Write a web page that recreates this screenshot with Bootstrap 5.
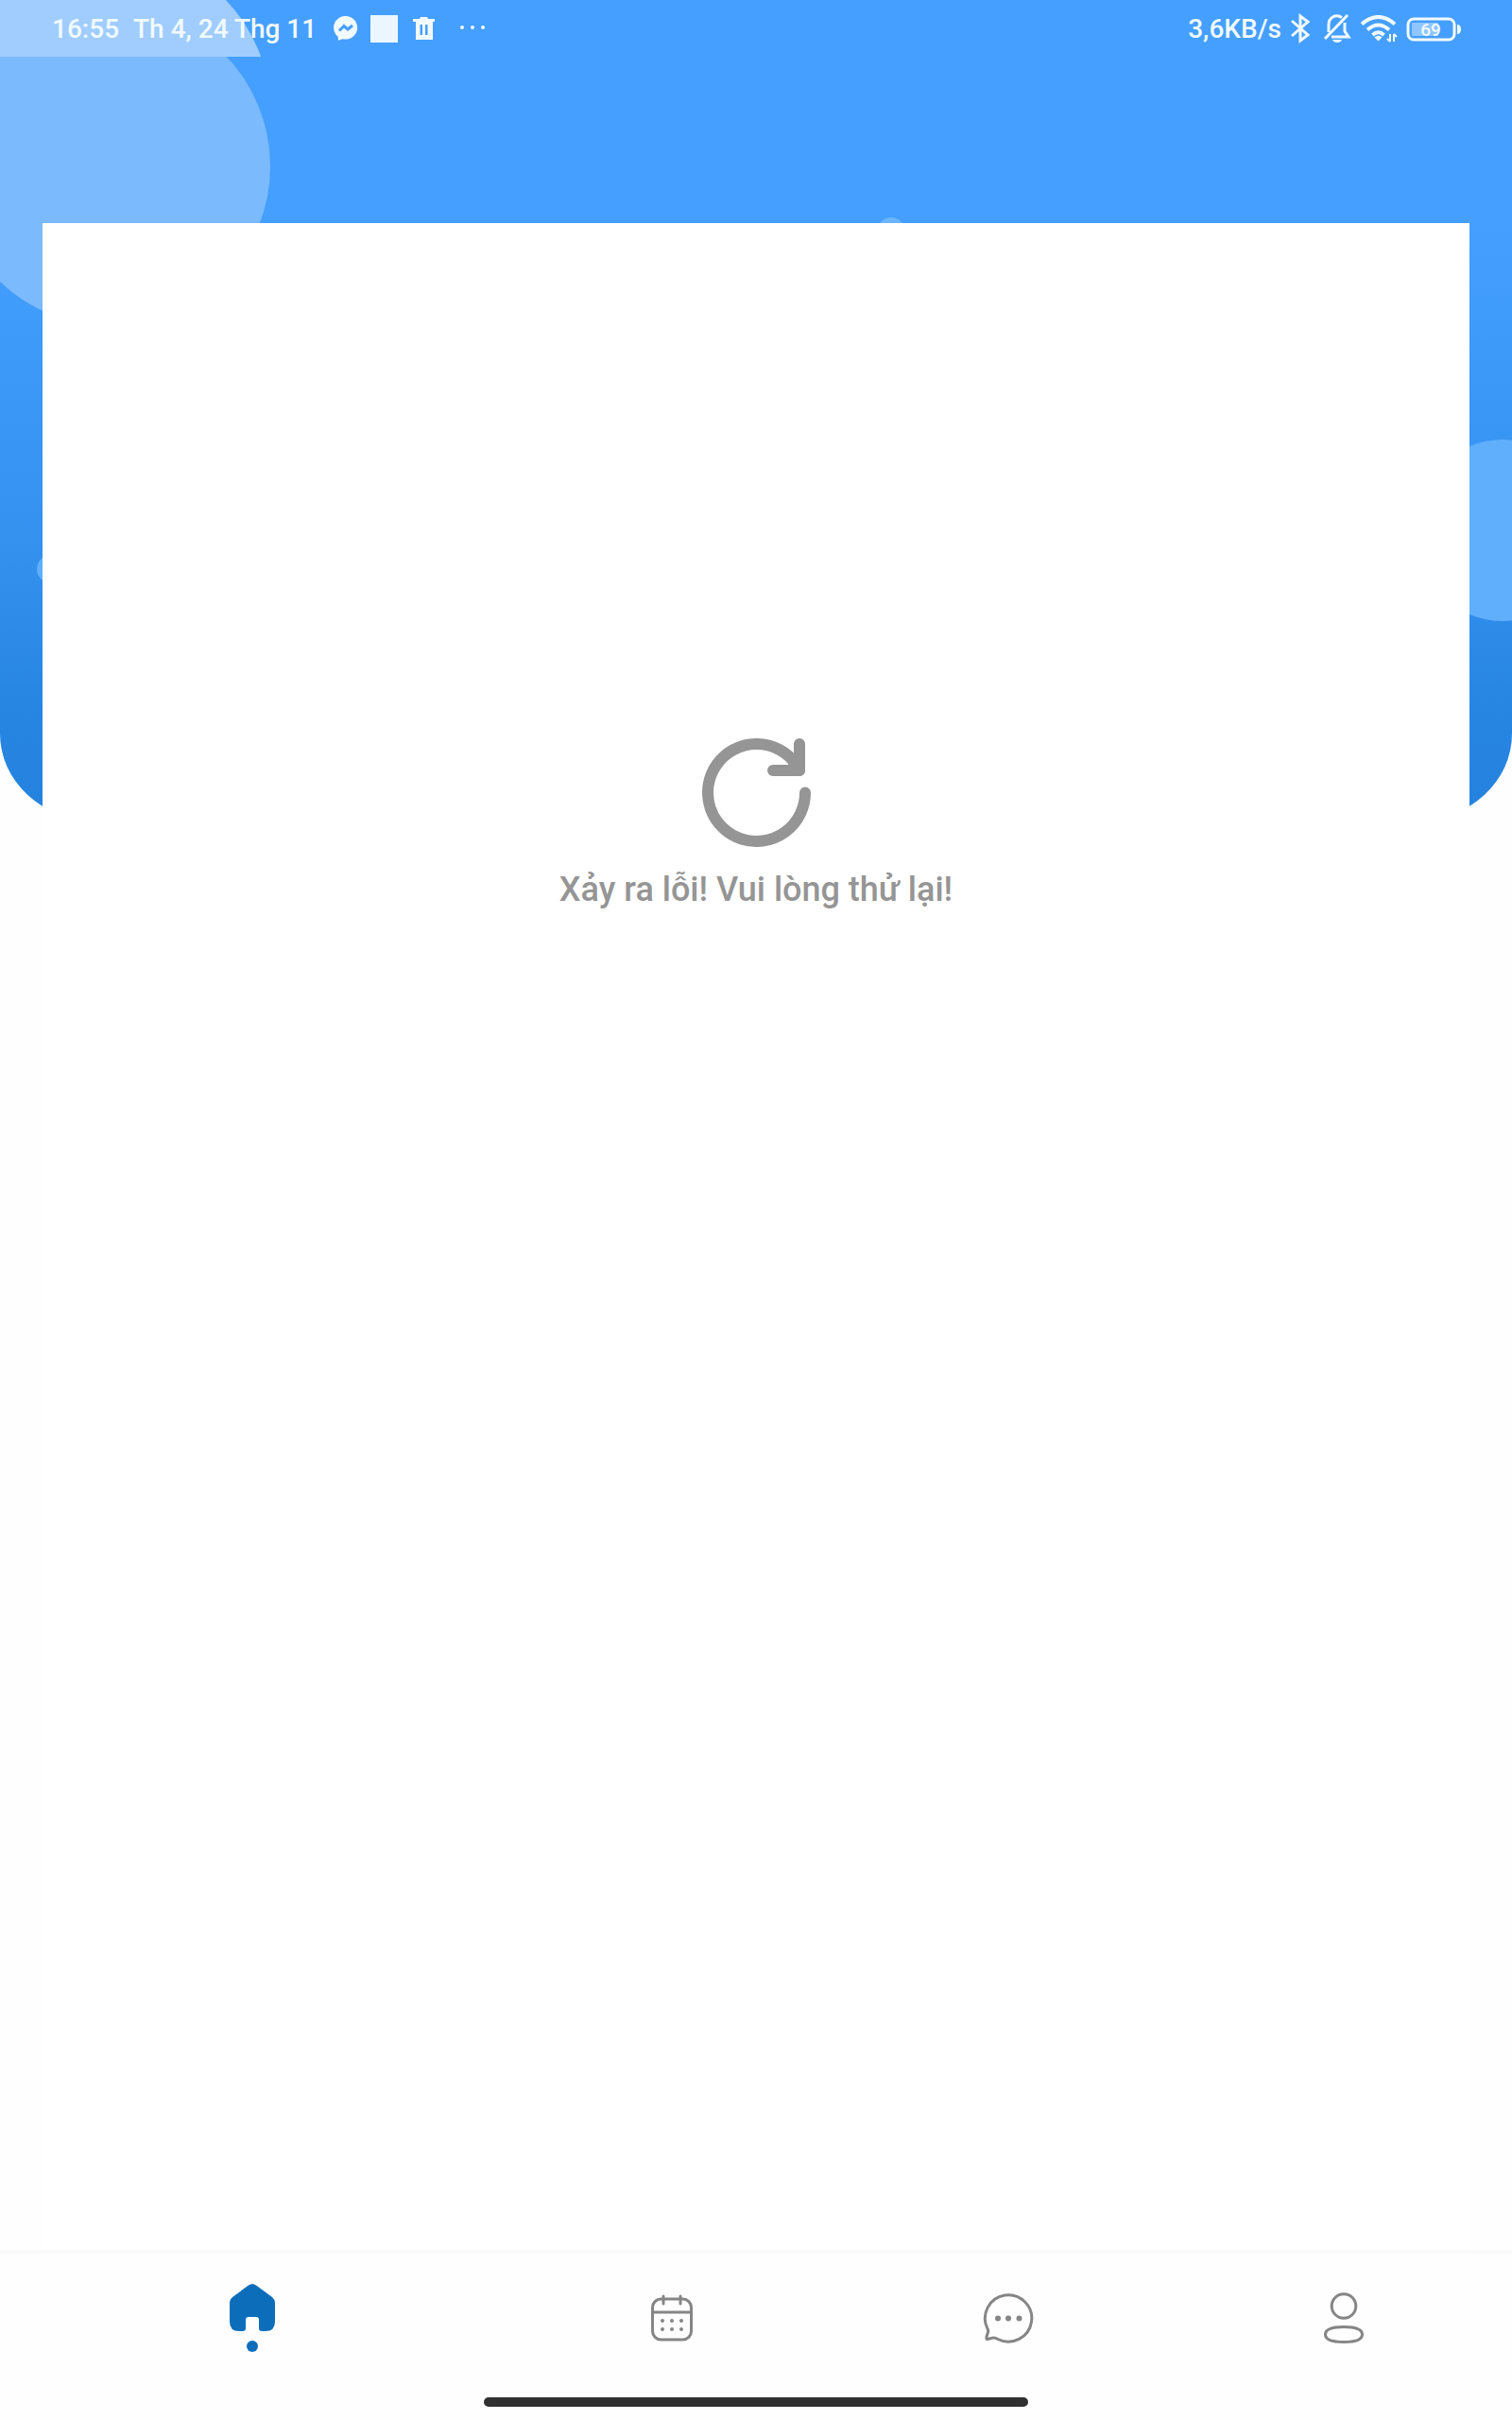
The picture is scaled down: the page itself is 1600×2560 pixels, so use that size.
<!DOCTYPE html>
<html lang="vi">
<head>
<meta charset="utf-8">
<meta name="viewport" content="width=device-width, initial-scale=1">
<title>Trang chủ</title>
<link href="https://cdn.jsdelivr.net/npm/bootstrap@5.3.0/dist/css/bootstrap.min.css" rel="stylesheet">
<style>
  body { background: #fefefe; font-family: Roboto, "Noto Sans", sans-serif; font-weight: 500; }
  svg { display: block; flex: none; }

  /* blue backdrop with bubbles behind the status bar and the panel */
  .backdrop { height: 868px; border-radius: 0 0 100px 100px / 0 0 92px 92px; background: linear-gradient(#459fff 0, #449ffe 240px, #3491ee 580px, #2785e2 760px, #2583df 868px); }
  .bubble { position: absolute; border-radius: 50%; background: #5faffc; }
  .bubble-main { left: -52px; top: 7px; width: 338px; height: 338px; background: #7bbafc; }
  .bubble-side { right: -87px; top: 465px; width: 192px; height: 192px; }
  .bubble-left { left: 39px; top: 587px; width: 30px; height: 30px; }
  .bubble-top { left: 928px; top: 230px; width: 30px; height: 30px; background: #6cb5fd; }
  .status-shade { height: 60px; background: #459fff; }
  .status-shade .bubble-main { top: -52px; background: #a0cdfe; }

  .status-bar { height: 60px; padding: 2px 54px 0 55px; font-size: 28px; line-height: 32px; color: #f1faff; }
  .status-date { margin-left: 15px; margin-right: 18px; }
  .panel { margin: 176px 45px 0; padding-top: 545px; background: #fff; }
  .retry { gap: 24px; color: #959595; font-size: 36px; font-weight: 500; line-height: 42px; }

  .tab-bar { border-top: 4px solid #fafafa; background: #fefefe; }
  .tab-row { height: 136px; }
  .tab-item { flex: 2 1 0; color: #858585; }
  .tab-item.active { flex-grow: 3; gap: 10px; color: #0c6eba; }
  .tab-dot { width: 12px; height: 12px; background: currentColor; }
  .gesture { width: 36%; height: 10px; margin: 16px auto 14px; background: #303030; }
</style>
</head>
<body>
<div class="min-vh-100 d-flex flex-column position-relative">

  <div class="backdrop position-absolute top-0 start-0 w-100 overflow-hidden" aria-hidden="true">
    <span class="bubble bubble-main"></span>
    <span class="bubble bubble-side"></span>
    <span class="bubble bubble-left"></span>
    <span class="bubble bubble-top"></span>
    <div class="status-shade position-relative overflow-hidden"><span class="bubble bubble-main"></span></div>
  </div>

  <header class="status-bar position-relative d-flex align-items-center justify-content-between">
    <div class="d-flex align-items-center">
      <span>16:55</span>
      <span class="status-date">Th 4, 24 Thg 11</span>
      <svg width="26" height="28" viewBox="0 0 26 28"><path fill="currentColor" d="M13 0a12.500 12.300 0 1 1-3.500 24.200L5 25.800 4.600 21.800A12.300 12.300 0 0 1 13 0z"/><path d="M6 15.500l5-5 4 3.500 5-4" fill="none" stroke="#459fff" stroke-width="3"/></svg>
      <svg class="ms-3" width="26" height="31" viewBox="0 0 26 31" overflow="visible"><path fill="#ebf6fe" d="M-3 0h29v29H-3z"/></svg>
      <svg class="ms-3" width="23" height="28" viewBox="0 0 23 28"><path fill="currentColor" fill-rule="evenodd" d="M8 1h7l1 2h7v3h-2v19H3V6H0V3h7zM7.500 9v11h2.500V9zM13 9v11h2.500V9z"/></svg>
      <svg class="ms-4" width="30" height="10" viewBox="0 0 30 10" fill="currentColor"><circle cx="5" cy="3" r="2"/><circle cx="16" cy="3" r="2"/><circle cx="27" cy="3" r="2"/></svg>
    </div>
    <div class="d-flex align-items-center">
      <span>3,6KB/s</span>
      <svg class="ms-2" width="28" height="34" viewBox="2 0 28 34" fill="none" stroke="currentColor" stroke-width="3"><path d="M5 8l17 15-8 6V3l8 6L5 24"/></svg>
      <svg class="ms-2" width="32" height="34" viewBox="0 0 32 34" fill="none" stroke="currentColor" stroke-width="3"><path d="M20 4.500C13 0 6 5 6 12v8M2 27L26 2M9 25h18l-4-6v-9"/><path stroke="none" fill="currentColor" d="M10 28h10q-1 3-5 3t-5-3z"/></svg>
      <svg class="ms-2" width="40" height="30" viewBox="0 0 40 30" fill="none" stroke="currentColor" stroke-width="4"><path d="M1 9.500q17.500-15 35 0M7 15.500q11.500-10 23 0M12.500 21q6-5.500 12 0"/><path stroke="none" fill="currentColor" d="M18.500 27.500l-4-4q4-3.500 8 0z"/><path stroke-width="2" d="M31 20v8M28 25l3 3M35 28v-8M38 23l-3-3"/></svg>
      <svg class="ms-2" width="58" height="26" viewBox="0 0 58 26"><rect x="2" y="2" width="49" height="22" rx="6" fill="none" stroke="currentColor" stroke-width="3"/><path fill="#8fc6ff" d="M6 7q0-1 1-1h27v14H7q-1 0-1-1z"/><path fill="currentColor" d="M54 8q4 0 4 5t-4 5z"/><text x="26" y="20" text-anchor="middle" font-size="19" font-weight="500" fill="currentColor">69</text></svg>
    </div>
  </header>

  <main class="panel position-relative flex-grow-1 d-flex flex-column align-items-center">
    <button type="button" class="retry btn border-0 p-0 d-flex flex-column align-items-center">
      <svg width="115" height="115" viewBox="0 0 115 115" fill="none" stroke="currentColor" stroke-width="12" stroke-linecap="round" stroke-linejoin="round"><path d="M109 57.500A51.500 51.500 0 1 1 99 27"/><path d="M103 6v28H75"/><path d="M96 24l7 10"/></svg>
      <span>Xảy ra lỗi! Vui lòng thử lại!</span>
    </button>
  </main>

  <footer class="tab-bar position-relative">
    <nav class="tab-row d-flex" aria-label="Điều hướng">
      <a href="#" class="tab-item active d-flex flex-column align-items-center justify-content-center" aria-label="Trang chủ" aria-current="page">
        <svg width="48" height="50" viewBox="0 0 48 50" fill="currentColor"><path d="M20 1.500q4-3 8 0L45 14q3 2.500 3 6v20q0 10-10 10h-4q-3 0-3-3V38q0-3-3-3h-8q-3 0-3 3v9q0 3-3 3h-4Q0 50 0 40V20q0-3.500 3-6z"/></svg>
        <span class="tab-dot rounded-circle"></span>
      </a>
      <a href="#" class="tab-item d-flex align-items-center justify-content-center" aria-label="Lịch">
        <svg width="44" height="50" viewBox="0 0 44 50" fill="none" stroke="currentColor" stroke-width="3"><rect x="1.500" y="5" width="41" height="43" rx="9"/><path d="M2 19h40"/><path stroke-linecap="round" d="M13 2v8M31 2v8"/><path stroke-linecap="round" stroke-width="4" d="M12 28h0M22 28h0M32 28h0M12 37h0M22 37h0M32 37h0"/></svg>
      </a>
      <a href="#" class="tab-item d-flex align-items-center justify-content-center" aria-label="Tin nhắn">
        <svg width="54" height="54" viewBox="0 0 54 54" fill="none" stroke="currentColor" stroke-width="3" stroke-linejoin="round"><path d="M5 38.500A24.700 24.700 0 1 1 16 49.500Q12 47 9 48.500L5 49.500Q3.500 50 4 47L5.500 42Q6 40.500 5 38.500z"/><path stroke-linecap="round" stroke-width="6" d="M16 27.500h0M27 27.500h0M38.500 27.500h0"/></svg>
      </a>
      <a href="#" class="tab-item d-flex align-items-center justify-content-center" aria-label="Tài khoản">
        <svg width="44" height="54" viewBox="0 0 44 54" fill="none" stroke="currentColor" stroke-width="3"><circle cx="22" cy="14.500" r="12.800"/><path d="M22 36.500c9 0 19.500 1 19.500 8s-10.500 8-19.500 8-19.500-1-19.500-8 10.500-8 19.500-8z"/></svg>
      </a>
    </nav>
    <div class="gesture rounded-pill"></div>
  </footer>
</div>
<script src="https://cdn.jsdelivr.net/npm/bootstrap@5.3.0/dist/js/bootstrap.bundle.min.js"></script>
</body>
</html>
